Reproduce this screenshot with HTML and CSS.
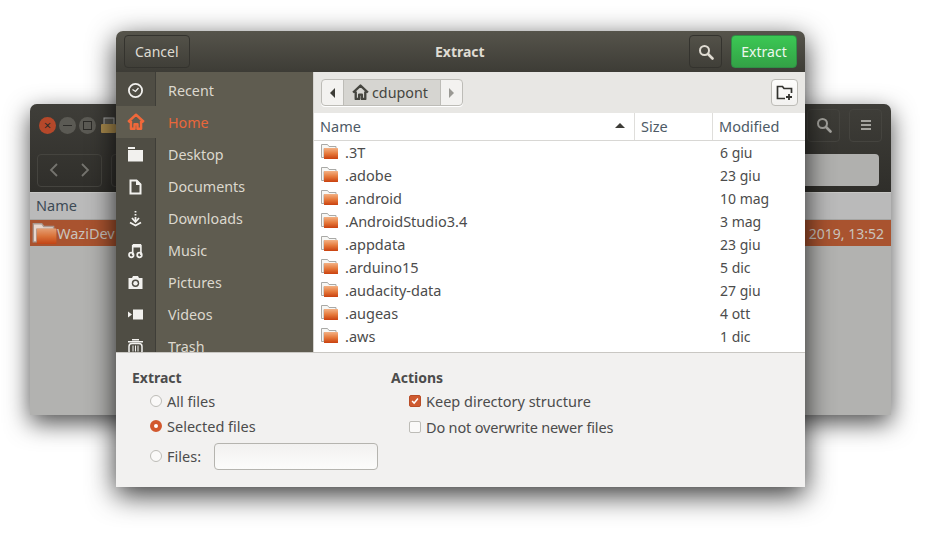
FILE: index.html
```html
<!DOCTYPE html>
<html lang="en">
<head>
  <meta charset="UTF-8">
  <meta name="viewport" content="width=device-width, initial-scale=1.0">
  <title>Extract</title>
  <link rel="stylesheet" href="styles.css">
</head>
<body>

<svg class="defs" width="0" height="0">
  <defs>
    <linearGradient id="orange" x1="0" y1="0" x2="0" y2="1">
      <stop offset="0" stop-color="#f3b184"/>
      <stop offset=".5" stop-color="#e67a3c"/>
      <stop offset="1" stop-color="#c9410f"/>
    </linearGradient>
    <symbol id="folder" viewBox="0 0 17 15">
      <path d="M.5 13.500V.5h6l1.500 2h7v2h-12v9z" fill="#f7f7f5" stroke="#a9a9a6"/>
      <rect x="3" y="4" width="14" height="11" rx=".5" fill="url(#orange)"/>
    </symbol>
    <symbol id="search" viewBox="0 0 16 16">
      <circle cx="6.500" cy="6.500" r="4.500" fill="none" stroke="currentColor" stroke-width="2"/>
      <path d="M10 10l4.500 4.500" stroke="currentColor" stroke-width="2.600" stroke-linecap="round"/>
    </symbol>
    <symbol id="menu" viewBox="0 0 16 16">
      <path d="M3 3h10v2H3zM3 7h10v2H3zM3 11h10v2H3z" fill="currentColor"/>
    </symbol>
    <symbol id="home" viewBox="0 0 16 16">
      <path d="M1 8l7-6.500L15 8M3.500 7v7h3.200v-4h2.600v4h3.200V7" fill="none" stroke="currentColor" stroke-width="2.200" stroke-linejoin="round"/>
    </symbol>
  </defs>
</svg>

<!-- window behind the dialog -->
<div class="back-win">
  <div class="back-head">
    <div class="back-title">
      <span class="wbtn close">&#215;</span>
      <span class="wbtn"><i class="min"></i></span>
      <span class="wbtn"><i class="max"></i></span>
      <svg class="app-icon" width="17" height="17" viewBox="0 0 17 17"><rect x="4" y="1" width="10" height="8" fill="#55544e" stroke="#aaa"/><rect x="1" y="7" width="15" height="9" rx="1" fill="#a98a4c"/></svg>
      <span class="grow"></span>
      <span class="back-btn"><svg width="16" height="16"><use href="#search"/></svg></span>
      <span class="back-btn"><svg width="16" height="16"><use href="#menu"/></svg></span>
    </div>
    <div class="back-tools">
      <span class="nav-group">
        <svg width="10" height="14" viewBox="0 0 10 14"><path d="M8 1L2 7l6 6" fill="none" stroke="currentColor" stroke-width="1.800"/></svg>
        <svg width="10" height="14" viewBox="0 0 10 14"><path d="M2 1l6 6-6 6" fill="none" stroke="currentColor" stroke-width="1.800"/></svg>
      </span>
      <span class="nav-next"></span>
      <span class="grow"></span>
      <span class="back-entry"></span>
    </div>
  </div>
  <div class="back-list">
    <div class="back-name">Name</div>
    <div class="back-row">
      <svg class="back-folder" width="25" height="21"><use href="#folder"/></svg>
      <span>WaziDev</span>
      <span class="grow"></span>
      <span class="back-date">2019, 13:52</span>
    </div>
  </div>
</div>

<!-- extract dialog -->
<div class="dialog">
  <header class="head">
    <button class="hbtn">Cancel</button>
    <div class="head-title">Extract</div>
    <button class="hbtn icon-btn"><svg width="16" height="16"><use href="#search"/></svg></button>
    <button class="hbtn go">Extract</button>
  </header>

  <div class="main">
    <nav class="side">
      <div class="side-row"><span class="side-ico"><svg width="17" height="17" viewBox="0 0 17 17"><circle cx="8.500" cy="8.500" r="6.600" fill="none" stroke="currentColor" stroke-width="1.800"/><path d="M5.500 7.500l3 2 3-3.500" fill="none" stroke="currentColor" stroke-width="1.300"/></svg></span>Recent</div>
      <div class="side-row active"><span class="side-ico"><svg width="18" height="18"><use href="#home"/></svg></span>Home</div>
      <div class="side-row"><span class="side-ico"><svg width="17" height="17" viewBox="0 0 17 17"><path d="M1 1h7v2H1zM1 4h15v11.500H1z" fill="currentColor"/></svg></span>Desktop</div>
      <div class="side-row"><span class="side-ico"><svg width="17" height="17" viewBox="0 0 17 17"><path d="M3.500 2.500h6l4 4v9h-10z" fill="none" stroke="currentColor" stroke-width="2"/><path d="M9 2h1l4 4v1H9z" fill="currentColor"/></svg></span>Documents</div>
      <div class="side-row"><span class="side-ico"><svg width="17" height="17" viewBox="0 0 17 17"><path d="M8.500 1v1.500M8.500 4v1.500M8.500 7v4" stroke="currentColor" stroke-width="1.800"/><path d="M5 8l3.500 4L12 8M3 12.500l5.500 3 5.500-3" fill="none" stroke="currentColor" stroke-width="1.800"/></svg></span>Downloads</div>
      <div class="side-row"><span class="side-ico"><svg width="17" height="17" viewBox="0 0 17 17"><circle cx="4.300" cy="13" r="2.300" fill="none" stroke="currentColor" stroke-width="1.700"/><circle cx="12.500" cy="13" r="2.300" fill="none" stroke="currentColor" stroke-width="1.700"/><path d="M5.700 13V3.500h8.200V13" fill="none" stroke="currentColor" stroke-width="1.600"/><path d="M6 2h8v3.500H6z" fill="currentColor"/></svg></span>Music</div>
      <div class="side-row"><span class="side-ico"><svg width="17" height="17" viewBox="0 0 17 17"><path d="M1.500 4h3.500l1-2h5l1 2h3.500v11h-14z" fill="currentColor"/><circle cx="8.500" cy="9.300" r="3.700" fill="#4f4d44"/><circle cx="8.500" cy="9.300" r="2.200" fill="currentColor"/></svg></span>Pictures</div>
      <div class="side-row"><span class="side-ico"><svg width="17" height="17" viewBox="0 0 17 17"><path d="M6 3.500h10v10H6zM1 5.500l4 3-4 3z" fill="currentColor"/></svg></span>Videos</div>
      <div class="side-row"><span class="side-ico"><svg width="17" height="17" viewBox="0 0 17 17"><path d="M1 3h15v1.500H1zM5 1h7v1.500H5z" fill="currentColor"/><rect x="2" y="5.500" width="13" height="10.500" rx="3" fill="none" stroke="currentColor" stroke-width="1.500"/><path d="M6 7.500v6M8.500 7.500v6M11 7.500v6" stroke="currentColor"/></svg></span>Trash</div>
    </nav>

    <section class="files">
      <div class="pathbar">
        <div class="crumbs">
          <span class="crumb-arrow"><i class="tri left"></i></span>
          <span class="crumb-home"><svg width="17" height="17"><use href="#home"/></svg>cdupont</span>
          <span class="crumb-arrow"><i class="tri right"></i></span>
        </div>
        <button class="newfolder"><svg width="17" height="17" viewBox="0 0 17 17"><path d="M9 14.500H1.500v-12h5l1.500 2h7.500V9" fill="none" stroke="#33332f" stroke-width="1.700"/><path d="M13 10v6M10 13h6" stroke="#33332f" stroke-width="1.800"/></svg></button>
      </div>
      <div class="cols">
        <div class="col-name">Name<i class="sort"></i></div>
        <div class="col-size">Size</div>
        <div class="col-mod">Modified</div>
      </div>
      <div class="rows">
        <div class="row"><svg class="f" width="17" height="15"><use href="#folder"/></svg><span class="fname">.3T</span><span class="fdate">6 giu</span></div>
        <div class="row"><svg class="f" width="17" height="15"><use href="#folder"/></svg><span class="fname">.adobe</span><span class="fdate">23 giu</span></div>
        <div class="row"><svg class="f" width="17" height="15"><use href="#folder"/></svg><span class="fname">.android</span><span class="fdate">10 mag</span></div>
        <div class="row"><svg class="f" width="17" height="15"><use href="#folder"/></svg><span class="fname">.AndroidStudio3.4</span><span class="fdate">3 mag</span></div>
        <div class="row"><svg class="f" width="17" height="15"><use href="#folder"/></svg><span class="fname">.appdata</span><span class="fdate">23 giu</span></div>
        <div class="row"><svg class="f" width="17" height="15"><use href="#folder"/></svg><span class="fname">.arduino15</span><span class="fdate">5 dic</span></div>
        <div class="row"><svg class="f" width="17" height="15"><use href="#folder"/></svg><span class="fname">.audacity-data</span><span class="fdate">27 giu</span></div>
        <div class="row"><svg class="f" width="17" height="15"><use href="#folder"/></svg><span class="fname">.augeas</span><span class="fdate">4 ott</span></div>
        <div class="row"><svg class="f" width="17" height="15"><use href="#folder"/></svg><span class="fname">.aws</span><span class="fdate">1 dic</span></div>
      </div>
    </section>
  </div>

  <footer class="opts">
    <div class="opt-left">
      <div class="opt-title">Extract</div>
      <label class="opt r1"><span class="radio"></span>All files</label>
      <label class="opt r2"><span class="radio on"></span>Selected files</label>
      <label class="opt r3"><span class="radio"></span>Files:<span class="entry"></span></label>
    </div>
    <div class="opt-right">
      <div class="opt-title">Actions</div>
      <label class="opt c1"><span class="check on"><svg width="12" height="12" viewBox="0 0 12 12"><path d="M2.500 6l2.500 2.500 4.500-5.500" fill="none" stroke="#fff" stroke-width="1.800"/></svg></span>Keep directory structure</label>
      <label class="opt c2"><span class="check"></span>Do not overwrite newer files</label>
    </div>
  </footer>
</div>

</body>
</html>
```
FILE: styles.css
```css
* {
  box-sizing: border-box;
}
html, body {
  margin: 0;
  height: 100%;
}
body {
  position: relative;
  width: 927px;
  height: 535px;
  overflow: hidden;
  background: #fff;
  font-family: "Noto Sans", sans-serif;
  font-size: 14px;
  color: #4c4c4c;
}
.defs {
  position: absolute;
}
.grow {
  flex: 1;
}

/* back window */
.back-win {
  position: absolute;
  left: 30px;
  top: 104px;
  width: 861px;
  height: 311px;
  border-radius: 7px 7px 0 0;
  background: #b2b2b0;
  box-shadow: 0 8px 24px rgba(0, 0, 0, .7);
}
.back-head {
  height: 88px;
  border-radius: 7px 7px 0 0;
  background: linear-gradient(#3f3e39, #2f2e2a);
}
.back-title {
  display: flex;
  align-items: center;
  height: 46px;
  padding: 0 9px 4px;
  gap: 3px;
}
.wbtn {
  width: 17px;
  height: 17px;
  border-radius: 50%;
  background: #5b5a54;
  display: flex;
  align-items: center;
  justify-content: center;
  color: #2c2b28;
  font-size: 13px;
  line-height: 1;
}
.wbtn.close {
  background: #b5482a;
}
.wbtn .min {
  width: 9px;
  height: 1px;
  background: #2c2b28;
}
.wbtn .max {
  width: 9px;
  height: 9px;
  border: 1px solid #2c2b28;
}
.app-icon {
  margin-left: 1px;
}
.back-btn {
  width: 33px;
  height: 33px;
  border: 1px solid #45443f;
  border-radius: 4px;
  margin-left: 6px;
  color: #a4a39e;
  display: flex;
  align-items: center;
  justify-content: center;
}
.back-tools {
  display: flex;
  align-items: center;
  height: 37px;
  padding: 3px 12px 0 7px;
}
.nav-group {
  width: 65px;
  height: 33px;
  border: 1px solid #45443f;
  border-radius: 4px;
  color: #75746f;
  display: flex;
  align-items: center;
  justify-content: space-between;
  padding: 0 11px;
}
.nav-next {
  width: 30px;
  height: 33px;
  border: 1px solid #45443f;
  border-radius: 4px;
  margin-left: 9px;
}
.back-entry {
  width: 90px;
  height: 32px;
  background: #b0b0ae;
  border-radius: 0 4px 4px 0;
}
.back-name {
  height: 28px;
  padding-left: 6px;
  line-height: 24px;
  color: #3d4a55;
  background: #bababa;
  border-top: 1px solid #c8c8c6;
  border-bottom: 1px solid #a5a5a3;
  font-size: 14.500px;
}
.back-row {
  height: 26px;
  display: flex;
  align-items: center;
  padding: 0 7px 0 2px;
  background: #a9532f;
  color: #c9c3bd;
  font-size: 14.500px;
}
.back-folder {
  opacity: .8;
}
.back-date {
  font-size: 14px;
}

/* dialog */
.dialog {
  position: absolute;
  left: 116px;
  top: 31px;
  width: 689px;
  height: 456px;
  display: flex;
  flex-direction: column;
  border-radius: 7px 7px 0 0;
  background: #f2f1f0;
  box-shadow: 0 8px 28px rgba(0, 0, 0, .8);
}
.head {
  height: 41px;
  flex: none;
  display: flex;
  align-items: center;
  padding: 0 8px;
  border-radius: 7px 7px 0 0;
  background: linear-gradient(#56544b, #3d3c36);
}
.hbtn {
  height: 33px;
  padding: 0 10px;
  border: 1px solid #34332e;
  border-radius: 4px;
  background: transparent;
  color: #dfdbd2;
  font: inherit;
  font-size: 14px;
}
.head-title {
  flex: 1;
  text-align: center;
  padding-left: 41px;
  color: #dfdbd2;
  font-weight: 700;
  font-size: 14px;
}
.icon-btn {
  width: 33px;
  padding: 0;
  margin-right: 9px;
  display: flex;
  align-items: center;
  justify-content: center;
}
.go {
  width: 66px;
  padding: 0;
  border-color: #2f8f45;
  background: linear-gradient(#3bc854, #33a246);
  color: #eef8ee;
}

.main {
  flex: 1;
  min-height: 0;
  display: flex;
  overflow: hidden;
  border-bottom: 1px solid #c9c7c3;
}
.side {
  width: 198px;
  flex: none;
  padding-top: 2px;
  overflow: hidden;
  background: linear-gradient(90deg, #4f4d44 39px, #3f3e38 39px, #3f3e38 40px, #5f5c50 40px);
  border-right: 1px solid #d5d3cf;
  color: #dcd8ce;
}
.side-row {
  display: flex;
  align-items: center;
  height: 32px;
  flex: none;
  font-size: 14.300px;
}
.side-ico {
  width: 39px;
  height: 100%;
  margin-right: 13px;
  display: flex;
  align-items: center;
  justify-content: center;
  color: #f2f1ee;
}
.side-row.active {
  color: #e9673a;
  background: #5f5c50;
}
.side-row.active .side-ico {
  color: #f0683a;
}

.files {
  flex: 1;
  min-width: 0;
  display: flex;
  flex-direction: column;
  background: #fff;
}
.pathbar {
  height: 41px;
  flex: none;
  display: flex;
  align-items: center;
  justify-content: space-between;
  padding: 0 7px;
  background: #e8e7e4;
}
.crumbs {
  display: flex;
  height: 27px;
  border: 1px solid #bdbcb7;
  border-radius: 4px;
  background: #f3f2f0;
  box-shadow: 0 1px 0 #fff;
}
.crumb-arrow {
  width: 21px;
  display: flex;
  align-items: center;
  justify-content: center;
}
.crumb-home {
  display: flex;
  align-items: center;
  gap: 3px;
  padding: 0 12px 1px 8px;
  background: #d6d5d1;
  border: solid #bdbcb7;
  border-width: 0 1px;
  color: #45453f;
  font-size: 14.300px;
}
.tri {
  width: 0;
  height: 0;
  border: 5px solid transparent;
}
.tri.left {
  border-right-color: #3d3c37;
  border-left-width: 0;
}
.tri.right {
  border-left-color: #9a9994;
  border-right-width: 0;
}
.newfolder {
  width: 27px;
  height: 27px;
  padding: 0;
  border: 1px solid #bdbcb7;
  border-radius: 4px;
  background: linear-gradient(#fdfdfc, #f2f1ef);
  display: flex;
  align-items: center;
  justify-content: center;
}
.cols {
  height: 28px;
  flex: none;
  display: flex;
  border-bottom: 1px solid #d8d7d4;
  background: #fff;
  color: #4d5a66;
  font-size: 14.500px;
  line-height: 27px;
}
.col-name {
  width: 321px;
  padding-left: 6px;
  border-right: 1px solid #dfdedb;
  position: relative;
}
.sort {
  position: absolute;
  right: 9px;
  top: 10px;
  border: 5px solid transparent;
  border-top-width: 0;
  border-bottom-color: #3d3c37;
}
.col-size {
  width: 78px;
  padding-left: 6px;
  border-right: 1px solid #dfdedb;
}
.col-mod {
  flex: 1;
  padding-left: 6px;
}
.rows {
  flex: 1;
  min-height: 0;
  overflow: hidden;
  color: #4c4c4c;
  font-size: 14.500px;
}
.row {
  display: flex;
  align-items: center;
  height: 23px;
  padding-bottom: 2px;
}
.f {
  margin-left: 7px;
  flex: none;
}
.fname {
  width: 382px;
  padding-left: 7px;
}
.fdate {
  font-size: 14px;
  padding-top: 2px;
}

/* options under the list */
.opts {
  height: 134px;
  flex: none;
  display: flex;
  padding: 15px 0 0 16px;
  font-size: 14.500px;
}
.opt-left {
  width: 259px;
}
.opt-title {
  font-weight: 700;
  height: 20px;
  line-height: 20px;
  font-size: 14px;
}
.opt {
  display: flex;
  align-items: center;
  height: 20px;
  margin-left: 18px;
}
.r1 {
  margin-top: 3px;
}
.r2 {
  margin-top: 5px;
}
.r3 {
  margin-top: 10px;
}
.c1 {
  margin-top: 3px;
}
.c2 {
  margin-top: 6px;
  letter-spacing: -.17px;
}
.radio, .check {
  width: 12px;
  height: 12px;
  flex: none;
  margin-right: 5px;
  background: #faf9f8;
  border: 1px solid #bdbcb7;
}
.radio {
  border-radius: 50%;
}
.radio.on {
  background: #fff;
  border: 4px solid #d2582e;
}
.check {
  border-radius: 2px;
  display: flex;
  align-items: center;
  justify-content: center;
}
.check.on {
  background: #cf5a30;
  border-color: #b94d27;
}
.entry {
  width: 164px;
  height: 27px;
  margin-left: 13px;
  border: 1px solid #b5b4af;
  border-radius: 4px;
  background: linear-gradient(#f2f1f0, #fcfcfb);
}
```
